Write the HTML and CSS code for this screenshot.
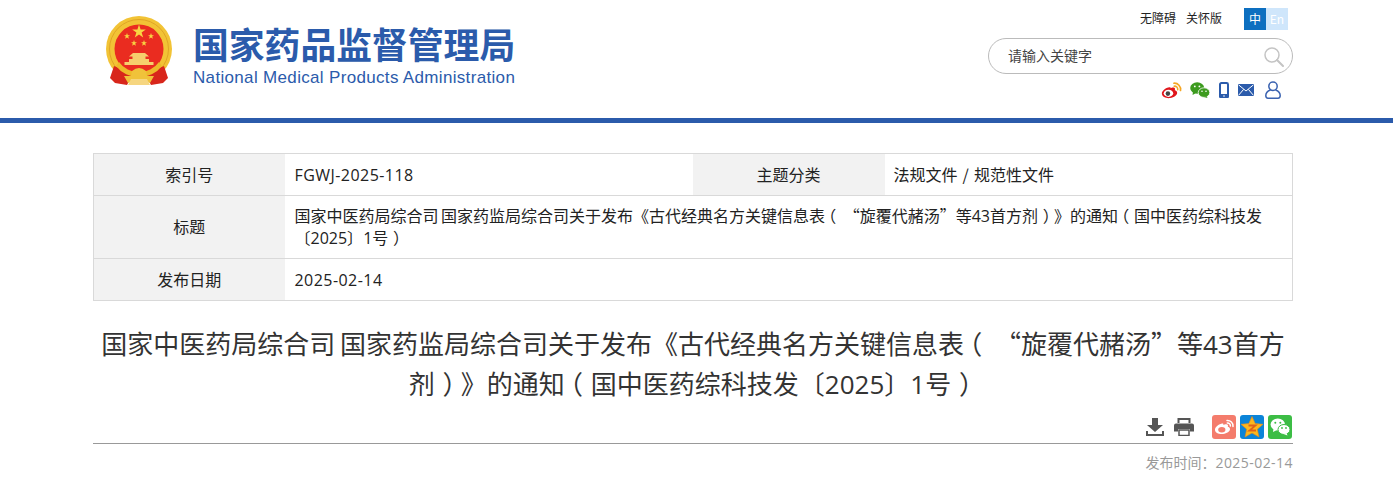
FILE: index.html
```html
<!DOCTYPE html>
<html lang="zh-CN">
<head>
<meta charset="utf-8">
<title>国家药品监督管理局</title>
<link rel="stylesheet" href="styles.css">
</head>
<body>
<header class="site-header">
  <div class="container header-inner">
    <a class="brand" href="#">
      <svg class="emblem" viewBox="0 0 66 70" aria-hidden="true">
        <circle cx="33" cy="33" r="33" fill="#f2c335"/>
        <circle cx="33" cy="33" r="29.500" fill="none" stroke="#e0a526" stroke-width="1"/>
        <circle cx="33" cy="33" r="24.500" fill="#ea2c20"/>
        <polygon points="33,8.500 34.600,13.400 39.800,13.400 35.600,16.500 37.200,21.400 33,18.400 28.800,21.400 30.400,16.500 26.200,13.400 31.400,13.400" fill="#f8d442"/>
        <polygon points="21,17 21.800,19.200 24,19.200 22.200,20.600 22.900,22.800 21,21.500 19.100,22.800 19.800,20.600 18,19.200 20.200,19.200" fill="#f8d442"/>
        <polygon points="45,17 45.800,19.200 48,19.200 46.200,20.600 46.900,22.800 45,21.500 43.100,22.800 43.800,20.600 42,19.200 44.200,19.200" fill="#f8d442"/>
        <polygon points="28,24 28.800,26.200 31,26.200 29.200,27.600 29.900,29.800 28,28.500 26.100,29.800 26.800,27.600 25,26.200 27.200,26.200" fill="#f8d442"/>
        <polygon points="38,24 38.800,26.200 41,26.200 39.200,27.600 39.900,29.800 38,28.500 36.100,29.800 36.800,27.600 35,26.200 37.200,26.200" fill="#f8d442"/>
        <path d="M27 37 H39 L43 40.500 H39.500 V43 H43 V46 H47.500 V49 H18.500 V46 H23 V43 H26.500 V40.500 H23 Z" fill="#f6cf6c"/>
        <path d="M8 50 L4 62 L9 67 L21 69 L27 58 Z" fill="#d8261b"/>
        <path d="M58 50 L62 62 L57 67 L45 69 L39 58 Z" fill="#d8261b"/>
        <path d="M13 46 A24.500 24.500 0 0 0 53 46 L56 50 A29 29 0 0 1 10 50 Z" fill="#eeb92a"/>
        <path d="M26 55 Q33 49 40 55 L41 60 H48 L44 67 L38 65 H28 L22 67 L18 60 H25 Z" fill="#f0c23a"/>
        <path d="M25 63 H41 L44 69 H22 Z" fill="#f6d680"/>
      </svg>
      <span class="brand-text">
        <span class="brand-cn">国家药品监督管理局</span>
        <span class="brand-en">National Medical Products Administration</span>
      </span>
    </a>
    <div class="header-tools">
      <div class="top-links">
        <a href="#">无障碍</a>
        <a href="#">关怀版</a>
        <span class="lang">
          <a class="lang-item lang-on" href="#">中</a><a class="lang-item lang-off" href="#">En</a>
        </span>
      </div>
      <form class="search">
        <span class="search-text">请输入关键字</span>
        <svg class="search-icon" viewBox="0 0 20 20" aria-hidden="true">
          <circle cx="8" cy="8" r="7" fill="none" stroke="#c4c4c4" stroke-width="1.500"/>
          <path d="M13 13 L19 19" stroke="#c4c4c4" stroke-width="2" stroke-linecap="round"/>
        </svg>
      </form>
      <div class="social">
        <svg class="ico-weibo" viewBox="0 0 22 18" aria-hidden="true">
          <path d="M9 5.500 C4.500 6 .5 9.500 .8 12.500 C1.200 16 5.500 17.500 9.500 17 C14 16.500 17 14 17 11.500 C17 9.800 15.600 9 14.500 8.700 C15 7 14.600 6 13.200 5.800 C12 5.700 10.600 6.300 10 6.600 C10.200 5.400 9.800 5.400 9 5.500 Z" fill="#e0161c"/>
          <ellipse cx="7.800" cy="12" rx="5" ry="3.800" fill="#fff"/>
          <circle cx="7.200" cy="12.300" r="2.400" fill="#444"/>
          <path d="M13.500 1.300 A6.500 6.500 0 0 1 20.500 9" fill="none" stroke="#f5a623" stroke-width="1.800" stroke-linecap="round"/>
          <path d="M13.800 4.400 A3.400 3.400 0 0 1 17.600 8.200" fill="none" stroke="#f5a623" stroke-width="1.600" stroke-linecap="round"/>
        </svg>
        <svg class="ico-wechat" viewBox="0 0 20 16" aria-hidden="true">
          <ellipse cx="7.200" cy="6" rx="7" ry="5.800" fill="#3d9b1f"/>
          <path d="M3 9.500 L2.600 13 L6 11 Z" fill="#3d9b1f"/>
          <ellipse cx="14" cy="10.600" rx="5.800" ry="4.800" fill="#3d9b1f" stroke="#fff" stroke-width=".8"/>
          <path d="M16.500 14 L17.500 16 L14 15 Z" fill="#3d9b1f"/>
          <circle cx="4.800" cy="4.400" r=".9" fill="#fff"/><circle cx="9.400" cy="4.400" r=".9" fill="#fff"/>
          <circle cx="12" cy="9.200" r=".8" fill="#fff"/><circle cx="16" cy="9.200" r=".8" fill="#fff"/>
        </svg>
        <svg class="ico-phone" viewBox="0 0 10 16" aria-hidden="true">
          <rect x="1" y="1" width="8" height="14" rx="1.400" fill="#fff" stroke="#2b5bab" stroke-width="2"/>
          <rect x="0" y="12" width="10" height="4" rx="1.200" fill="#2b5bab"/>
          <circle cx="5" cy="14" r=".8" fill="#fff"/>
        </svg>
        <svg class="ico-mail" viewBox="0 0 16 12" aria-hidden="true">
          <rect width="16" height="12" fill="#2b5bab"/>
          <path d="M.5 .8 L8 7 L15.500 .8 M.5 11.400 L5.600 5.400 M15.500 11.400 L10.400 5.400" fill="none" stroke="#fff" stroke-width="1"/>
        </svg>
        <svg class="ico-user" viewBox="0 0 16 18" aria-hidden="true">
          <circle cx="8" cy="5.200" r="4.200" fill="none" stroke="#3a62b0" stroke-width="1.500"/>
          <path d="M5.500 9 C2.500 10 .8 12 .8 14.600 C.8 16.400 1.800 17.200 3 17.200 H13 C14.200 17.200 15.200 16.400 15.200 14.600 C15.200 12 13.500 10 10.500 9" fill="none" stroke="#3a62b0" stroke-width="1.500"/>
        </svg>
      </div>
    </div>
  </div>
</header>

<main class="container">
  <table class="meta">
    <colgroup>
      <col class="col-label"><col class="col-value"><col class="col-label2"><col>
    </colgroup>
    <tr class="row-short">
      <th>索引号</th><td><span class="num num-wide">FGWJ-2025-118</span></td>
      <th>主题分类</th><td class="cat-cell">法规文件 / 规范性文件</td>
    </tr>
    <tr class="row-title">
      <th>标题</th>
      <td colspan="3">国家中医药局综合司 国家药监局综合司关于发布《古代经典名方关键信息表<span class="op">（</span> “旋覆代赭汤”等<span class="num">43</span>首方剂<span class="cp">）</span>》的通知<span class="op">（</span>国中医药综科技发〔<span class="num">2025</span>〕<span class="num">1</span>号<span class="cp">）</span></td>
    </tr>
    <tr class="row-short">
      <th>发布日期</th><td colspan="3"><span class="num num-wide">2025-02-14</span></td>
    </tr>
  </table>

  <h1 class="doc-title">国家中医药局综合司 国家药监局综合司关于发布《古代经典名方关键信息表<span class="op">（</span> “旋覆代赭汤”等<span class="num">43</span>首方剂<span class="cp">）</span>》的通知<span class="op">（</span>国中医药综科技发〔<span class="num">2025</span>〕<span class="num">1</span>号<span class="cp">）</span></h1>

  <div class="doc-actions">
    <svg class="act-icon" viewBox="0 0 18 18" aria-hidden="true">
      <path d="M6 0 H12 V7 H17 L9 14 L1 7 H6 Z" fill="#555"/>
      <path d="M1 13 V17 H17 V13" fill="none" stroke="#555" stroke-width="2"/>
    </svg>
    <svg class="act-icon print" viewBox="0 0 20 18" aria-hidden="true">
      <path d="M4.500 5 V1 H15.500 V5" fill="none" stroke="#555" stroke-width="2"/>
      <path d="M2 5.500 H18 A2 2 0 0 1 20 7.500 V13.500 H16 V11 H4 V13.500 H0 V7.500 A2 2 0 0 1 2 5.500 Z" fill="#555"/>
      <rect x="5" y="12" width="10" height="5.500" fill="#fff" stroke="#555" stroke-width="1.500"/>
    </svg>
    <span class="share share-weibo">
      <svg viewBox="0 0 24 24" aria-hidden="true">
        <path d="M10 8.500 C6 9.500 2.800 12.500 3 15 C3.300 18 7 19.500 11 19 C15 18.500 18 16.500 18 14 C18 12.800 17 12 15.800 11.700 C16.400 10.200 15.800 9.300 14.500 9.200 C13.300 9.100 12 9.700 11.400 10 C11.600 8.700 11 8.300 10 8.500 Z" fill="#fff"/>
        <ellipse cx="9.800" cy="14.800" rx="3.600" ry="2.700" fill="#f47c6c"/>
        <path d="M15 5.500 A5.500 5.500 0 0 1 21 11.500 M15.300 8 A2.800 2.800 0 0 1 18.400 11" fill="none" stroke="#fff" stroke-width="1.500" stroke-linecap="round"/>
      </svg>
    </span>
    <span class="share share-qzone">
      <svg viewBox="0 0 24 24" aria-hidden="true">
        <polygon points="12,1.500 15.200,8.600 23,9.300 17.300,14.200 19,22 12,18 5,22 6.700,14.200 1,9.300 8.800,8.600" fill="#fbb81e" stroke="#e8881a" stroke-width=".6"/>
        <path d="M8.500 10.500 H15.500 L9.500 15.500 H16" fill="none" stroke="#e0621a" stroke-width="1.800"/>
      </svg>
    </span>
    <span class="share share-wechat">
      <svg viewBox="0 0 24 24" aria-hidden="true">
        <ellipse cx="9.800" cy="9.500" rx="7.200" ry="6" fill="#fff"/>
        <path d="M5.500 13.500 L5 17 L9 15 Z" fill="#fff"/>
        <ellipse cx="16" cy="14.500" rx="6" ry="5" fill="#fff" stroke="#3cbd45" stroke-width="1"/>
        <path d="M18.500 18 L19.500 20.500 L15.500 19 Z" fill="#fff"/>
        <circle cx="7.300" cy="7.800" r="1" fill="#3cbd45"/><circle cx="12.300" cy="7.800" r="1" fill="#3cbd45"/>
        <circle cx="14" cy="13" r=".9" fill="#3cbd45"/><circle cx="18" cy="13" r=".9" fill="#3cbd45"/>
      </svg>
    </span>
  </div>
  <p class="doc-date">发布时间：<span class="num num-wide">2025-02-14</span></p>
</main>
</body>
</html>
```

FILE: styles.css
```css
* { box-sizing: border-box; }
html, body { margin: 0; padding: 0; overflow: hidden; }
body {
  background: #fff;
  color: #333;
  font-family: "Noto Sans CJK SC", "Noto Sans", sans-serif;
  text-spacing-trim: space-all;
}
a { color: inherit; text-decoration: none; }
.container { width: 1200px; margin-left: 93px; }
.num { font-family: "Open Sans", "Noto Sans CJK SC", sans-serif; line-height: 1; }
.num-wide { letter-spacing: .45px; }
.op, .cp { font-feature-settings: "halt"; }
.op { padding: 0 .3em 0 .2em; }
.cp { padding: 0 .2em 0 .3em; }

.site-header { height: 123px; border-bottom: 5px solid #2b5bab; }
.header-inner { display: flex; justify-content: space-between; }
.brand { display: flex; padding: 16px 0 0 13px; }
.emblem { width: 66px; height: 70px; display: block; }
.brand-text { display: flex; flex-direction: column; margin-left: 21px; color: #2b5bab; }
.brand-cn { font-size: 35.800px; font-weight: 700; line-height: 42px; margin-top: 6px; white-space: nowrap; }
.brand-en { font-family: "Liberation Sans", sans-serif; font-size: 17px; letter-spacing: .33px; line-height: 20px; margin-top: 4px; white-space: nowrap; }

.header-tools { width: 305px; display: flex; flex-direction: column; }
.top-links { display: flex; justify-content: flex-end; align-items: center; height: 22px; margin-top: 8px; padding-right: 5px; font-size: 12px; line-height: 20px; color: #222; }
.top-links > a { margin-right: 10px; padding-bottom: 2px; }
.lang { display: flex; margin-left: 12px; }
.lang-item { width: 22px; height: 22px; line-height: 22px; text-align: center; }
.lang-on { background: #0d6fc0; color: #fff; }
.lang-off { background: #cfe6fb; color: #fff; }
.search { display: flex; align-items: center; justify-content: space-between; height: 36px; margin-top: 8px; padding: 0 8px 0 19px; border: 1px solid #bbb; border-radius: 18px; font-size: 14px; line-height: 20px; color: #444; }
.search-text { margin-top: -2px; }
.search-icon { width: 20px; height: 20px; margin-top: 2px; }
.social { display: flex; justify-content: flex-end; align-items: center; height: 22px; margin-top: 5px; padding-right: 12px; }
.ico-weibo { width: 21px; height: 17px; }
.ico-wechat { width: 20px; height: 16px; margin-left: 8px; }
.ico-phone { width: 10px; height: 16px; margin-left: 9px; }
.ico-mail { width: 16px; height: 12px; margin-left: 9px; }
.ico-user { width: 16px; height: 18px; margin-left: 11px; }

.meta { width: 1200px; margin-top: 30px; border-collapse: collapse; table-layout: fixed; font-size: 16px; line-height: 22px; color: #222; }
.col-label { width: 191px; }
.col-value { width: 408px; }
.col-label2 { width: 192px; }
.meta th, .meta td { border-top: 1px solid #d9d9d9; border-bottom: 1px solid #d9d9d9; padding: 8px 9px 10px; }
.meta th { background: #f2f2f2; font-weight: 400; text-align: center; border-left: 1px solid #d9d9d9; }
.meta tr th ~ th { border-left: 0; }
.meta td:last-child { border-right: 1px solid #d9d9d9; }
.meta td { padding-left: 10px; }
.row-title td { word-spacing: -1px; }
.meta .cat-cell { padding-left: 9px; word-spacing: 1.500px; }
.row-short th, .row-short td { height: 42px; padding-top: 0; padding-bottom: 2px; }

.doc-title { margin: 22px 0 0; font-size: 26px; line-height: 40px; font-weight: 400; text-align: center; word-spacing: -1px; color: #333; }
.doc-actions { display: flex; justify-content: flex-end; align-items: center; height: 24px; margin-top: 12px; padding-right: 1px; }
.act-icon { width: 18px; height: 18px; }
.print { width: 20px; margin-left: 10px; margin-right: 18px; }
.share { display: block; width: 24px; height: 24px; margin-left: 4px; border-radius: 3px; }
.print + .share { margin-left: 0; }
.share svg { display: block; width: 24px; height: 24px; }
.share-weibo { background: #f47c6c; }
.share-qzone { background: #0b84d8; }
.share-wechat { background: #3cbd45; }
.doc-date { margin: 4px 0 0; padding-top: 7px; border-top: 1px solid #999; font-size: 14px; line-height: 22px; text-align: right; color: #999; }
```
